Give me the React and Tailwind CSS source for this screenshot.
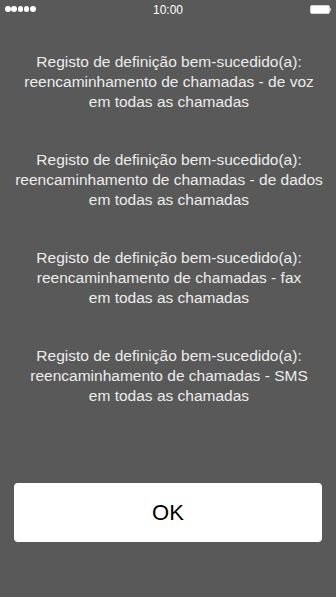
export default function App() {
  const items = ['de voz', 'de dados', 'fax', 'SMS']

  return (
    <div className="w-[336px] h-[597px] bg-[#595959] flex flex-col font-['Liberation_Sans',Arial,sans-serif]">
      <div className="h-5 relative flex items-center justify-between pl-[5px] pr-[5px]">
        <div className="flex gap-[0.75px] -mt-[2px]">
          {[0, 1, 2, 3, 4].map((i) => (
            <span key={i} className="w-[5.5px] h-[5.5px] rounded-full bg-white" />
          ))}
        </div>
        <span className="absolute left-0 right-0 text-center text-[12px] text-white -mt-[1px]">10:00</span>
        <div className="flex items-center -mt-[1px]">
          <div className="w-[20px] h-[9px] rounded-[2px] border border-[#d4d4d4] bg-white" />
          <div className="w-[1.5px] h-[3px] bg-[#d4d4d4] rounded-r-sm" />
        </div>
      </div>

      <div className="flex flex-col gap-[38px] pt-[32px] pl-[2px]">
        {items.map((t) => (
          <p key={t} className="text-center whitespace-nowrap text-[15.5px] leading-[20px] text-[#ececec]">
            Registo de definição bem-sucedido(a):
            <br />
            reencaminhamento de chamadas - {t}
            <br />
            em todas as chamadas
          </p>
        ))}
      </div>

      <div className="mt-auto mb-[55px] px-[14px]">
        <button className="w-full h-[59px] bg-white rounded-[4px] text-[22px] text-black">OK</button>
      </div>
    </div>
  )
}
